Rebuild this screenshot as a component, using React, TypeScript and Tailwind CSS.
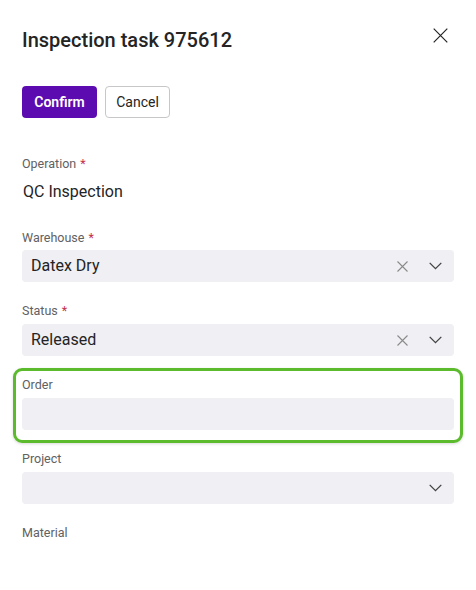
const font = { fontFamily: '"Segoe UI", Roboto, "Open Sans", sans-serif' };

function ClearIcon() {
  return (
    <svg width="11" height="11" viewBox="0 0 11 11" className="text-[#8a8a8a]">
      <path d="M0.5 0.5 L10.5 10.5 M10.5 0.5 L0.5 10.5" stroke="currentColor" strokeWidth="1.1" fill="none" />
    </svg>
  );
}

function Chevron() {
  return (
    <svg width="13" height="8" viewBox="0 0 13 8" className="text-[#424242]">
      <path d="M0.7 0.9 L6.5 6.7 L12.3 0.9" stroke="currentColor" strokeWidth="1.3" fill="none" />
    </svg>
  );
}

function Label({ text, required }: { text: string; required?: boolean }) {
  return (
    <div className="h-4 text-[12.5px] leading-4 text-[#616161]">
      {text}
      {required && <span className="ml-1 text-[#c4314b]">*</span>}
    </div>
  );
}

function SelectField({ value, clearable, mt }: { value?: string; clearable?: boolean; mt: string }) {
  return (
    <div className={`${mt} flex h-8 items-center rounded-[4px] bg-[#efeff4] pl-[9px] pr-[12px]`}>
      <span className="flex-1 text-[16px] leading-5 text-[#242424]">{value}</span>
      {clearable && (
        <span className="mr-[21px] flex items-center">
          <ClearIcon />
        </span>
      )}
      <Chevron />
    </div>
  );
}

export default function App() {
  return (
    <div className="h-[590px] w-[476px] bg-white text-[#242424]" style={font}>
      <div className="flex h-[54px] items-start justify-between pl-[22px] pr-[28px] pt-[26px]">
        <h1 className="h-7 text-[20px] font-medium leading-7">Inspection task 975612</h1>
        <svg width="15" height="15" viewBox="0 0 15 15" className="mt-[2px] text-[#242424]">
          <path d="M0.7 0.7 L14.3 14.3 M14.3 0.7 L0.7 14.3" stroke="currentColor" strokeWidth="1.2" fill="none" />
        </svg>
      </div>

      <div className="mt-[32px] flex gap-2 px-[22px]">
        <button className="h-8 w-[75px] rounded-[4px] bg-[#5c0bb0] text-[14px] font-semibold text-white">
          Confirm
        </button>
        <button className="h-8 w-[65px] rounded-[4px] border border-[#c7c7c7] bg-white text-[14px] text-[#242424]">
          Cancel
        </button>
      </div>

      <div className="mt-[38px] px-[22px]">
        <Label text="Operation" required />
        <div className="mt-[10px] h-5 pl-[1px] text-[16px] leading-5">QC Inspection</div>
      </div>

      <div className="mt-[28px] px-[22px]">
        <Label text="Warehouse" required />
        <SelectField value="Datex Dry" clearable mt="mt-[4px]" />
      </div>

      <div className="mt-[21px] px-[22px]">
        <Label text="Status" required />
        <SelectField value="Released" clearable mt="mt-[5px]" />
      </div>

      <div className="mx-[13px] mt-[12px] rounded-[9px] border-[3px] border-[#5cba2d] px-[6px] pb-[10px] pt-[6px] shadow-[0_1px_3px_rgba(0,0,0,0.15)]">
        <Label text="Order" />
        <div className="mt-[5px] h-8 rounded-[4px] bg-[#efeff4]" />
      </div>

      <div className="mt-[8px] px-[22px]">
        <Label text="Project" />
        <div className="mt-[5px] flex h-8 items-center justify-end rounded-[4px] bg-[#efeff4] pr-[12px]">
          <Chevron />
        </div>
      </div>

      <div className="mt-[21px] px-[22px]">
        <Label text="Material" />
      </div>
    </div>
  );
}
